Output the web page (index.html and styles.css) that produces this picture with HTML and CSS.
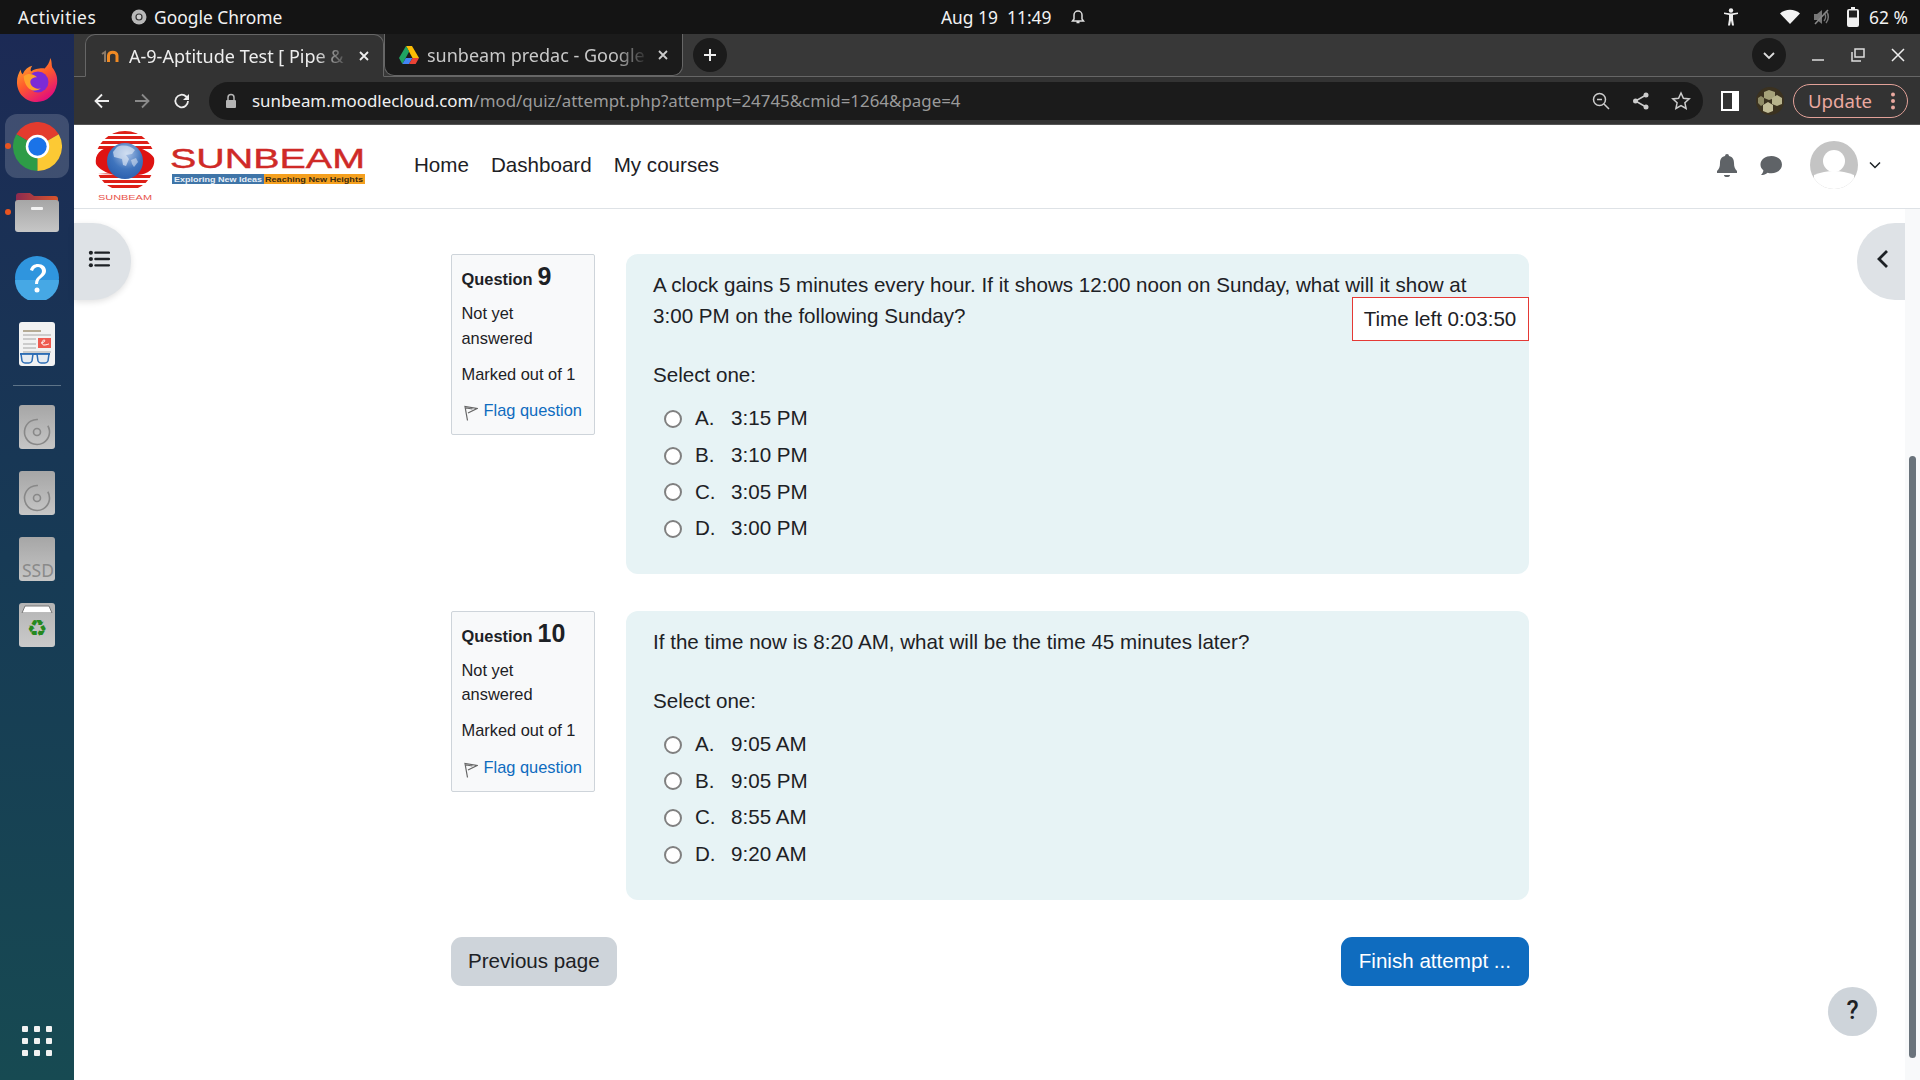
FILE: index.html
```html
<!DOCTYPE html>
<html lang="en">
<head>
<meta charset="utf-8">
<title>A-9-Aptitude Test</title>
<link rel="stylesheet" href="styles.css">
</head>
<body>
<div class="topbar">
  <span class="activities">Activities</span>
  <span class="appname">
    <svg class="app-ic" viewBox="0 0 16 16"><circle cx="8" cy="8" r="7.5" fill="#b8b8b8"/><circle cx="8" cy="8" r="3.6" fill="#333"/><circle cx="8" cy="8" r="2.4" fill="#ccc"/></svg>
    Google Chrome
  </span>
  <span class="clock">Aug 19&nbsp;&nbsp;11:49</span>
  <svg class="clock-bell" viewBox="0 0 16 16"><path d="M8 2a4 4 0 0 0-4 4v4l-1.5 2h11L12 10V6a4 4 0 0 0-4-4zM6.5 13.5h3" fill="none" stroke="#ddd" stroke-width="1.5"/></svg>
  <div class="tray">
    <svg class="tray-a11y" viewBox="0 0 16 18"><circle cx="8" cy="2.5" r="2.2" fill="#eee"/><path d="M1 6l5 1v4l-1 6.500h2l1-5 1 5h2L10 11V7l5-1V4.500L8 5.500 1 4.500z" fill="#eee"/></svg>
    <svg class="tray-wifi" viewBox="0 0 20 16"><path d="M10 15L0 4.500C5.500-.5 14.500-.5 20 4.500z" fill="#f2f2f2"/></svg>
    <svg class="tray-vol" viewBox="0 0 18 18"><path d="M1 6h3l5-4v14l-5-4H1z" fill="#777"/><path d="M11 5a6 6 0 0 1 0 8M13 3a9 9 0 0 1 0 12" fill="none" stroke="#777" stroke-width="1.500"/><path d="M2 16L15 2" stroke="#888" stroke-width="1.500"/></svg>
    <svg class="tray-bat" viewBox="0 0 12 20"><path d="M4 0h4v2h2a2 2 0 0 1 2 2v14a2 2 0 0 1-2 2H2a2 2 0 0 1-2-2V4a2 2 0 0 1 2-2h2z" fill="#f0f0f0"/><rect x="2" y="3.500" width="8" height="7" fill="#222"/></svg>
    <span class="battery">62 %</span>
  </div>
</div>

<div class="desktop">
  <nav class="dock">
    <div class="dock-slot">
      <svg class="ic-firefox" viewBox="0 0 44 48">
        <defs>
          <linearGradient id="ff" x1="0" y1="0" x2="0.6" y2="1"><stop offset="0" stop-color="#ffbd2e"/><stop offset="0.55" stop-color="#ff5a2c"/><stop offset="1" stop-color="#e3107a"/></linearGradient>
        </defs>
        <path d="M36 1c2 4 1 7 2 10 4 5 6 11 5 17-2 12-11 19-21 19C10 47 1 38 1 26c0-5 2-10 4-13 0 3 1 4 2 5 2-5 6-8 10-9-2 3-2 5-1 6 3-3 12-4 14-3 3-3 5-6 6-11z" fill="url(#ff)"/>
        <circle cx="23" cy="26" r="11" fill="#7b2bd6"/>
        <path d="M8 20c5-4 11-2 14 1-4 0-7 2-7 5 0 4 5 8 11 7-7 5-17 1-18-13z" fill="#ffa12b"/>
      </svg>
    </div>
    <div class="dock-slot is-active">
      <i class="run-dot"></i>
      <svg class="ic-chrome" viewBox="0 0 48 48">
        <path d="M24 24L44.800 12A24 24 0 0 0 3.200 12z" fill="#e33b2e"/>
        <path d="M24 24L3.200 12A24 24 0 0 0 24 48z" fill="#2d9c47"/>
        <path d="M24 24L24 48A24 24 0 0 0 44.800 12z" fill="#fcc934"/>
        <circle cx="24" cy="24" r="11.500" fill="#fff"/>
        <circle cx="24" cy="24" r="9" fill="#1a73e8"/>
      </svg>
    </div>
    <div class="dock-slot">
      <i class="run-dot"></i>
      <svg class="ic-tile-wide" viewBox="0 0 44 40">
        <defs>
          <linearGradient id="tile" x1="0" y1="0" x2="0" y2="1"><stop offset="0" stop-color="#a6a6a6"/><stop offset="1" stop-color="#c6c6c6"/></linearGradient>
          <linearGradient id="fold" x1="0" y1="0" x2="1" y2="0"><stop offset="0" stop-color="#8c2a50"/><stop offset="1" stop-color="#d9552b"/></linearGradient>
        </defs>
        <path d="M1 4a3 3 0 0 1 3-3h11l4 3h21a3 3 0 0 1 3 3v8H1z" fill="url(#fold)"/>
        <rect x="0" y="8" width="44" height="32" rx="3" fill="url(#tile)"/>
        <rect x="16" y="15" width="12" height="3" rx="1" fill="#f3f3f3"/>
      </svg>
    </div>
    <div class="dock-slot">
      <svg class="ic-tile-wide" viewBox="0 0 44 44"><circle cx="22" cy="22" r="22" fill="#2f95de"/><path d="M0 24a22 22 0 0 0 44 0z" fill="#46a8e5"/><path d="M15 14c1-4 4-6 8-6 5 0 8 3 8 7 0 6-8 6-8 13h-3c0-8 7-8 7-13 0-2-2-4-4-4s-4 1-5 4z" fill="#fff"/><circle cx="22" cy="34" r="2.500" fill="#fff"/></svg>
    </div>
    <div class="dock-slot">
      <svg class="ic-tile" viewBox="0 0 36 44">
        <rect width="36" height="44" rx="3" fill="#f2f2f2"/>
        <rect x="4" y="8" width="18" height="2" fill="#b5ab95"/>
        <rect x="4" y="12" width="28" height="2" fill="#ccc"/>
        <rect x="4" y="16" width="13" height="2" fill="#ccc"/>
        <rect x="4" y="21" width="13" height="2" fill="#ccc"/>
        <rect x="4" y="25" width="13" height="2" fill="#ccc"/>
        <rect x="4" y="29" width="28" height="2" fill="#ccc"/>
        <rect x="19" y="16" width="13" height="10" fill="#ee5a50"/>
        <path d="M22 21c3 0 5-3 3-3s-3 5 0 5 4-1 5-1" fill="none" stroke="#fff"/>
        <path d="M1 32h30" stroke="#2e6db5" stroke-width="2"/>
        <path d="M2 32h12l-1 7q-1 2-3 2H6q-2 0-3-2zM18 32h12l-1 7q-1 2-3 2h-4q-2 0-3-2z" fill="#dbe6f2" fill-opacity=".5" stroke="#2e6db5" stroke-width="1.500"/>
      </svg>
    </div>
    <hr class="dock-sep">
    <div class="dock-slot">
      <svg class="ic-tile" viewBox="0 0 36 44"><rect width="36" height="44" rx="3" fill="url(#tile)"/><circle cx="18" cy="27" r="12.500" fill="none" stroke="#888" stroke-width="1.600" stroke-dasharray="66 13" transform="rotate(-30 18 27)"/><circle cx="18" cy="27" r="3.500" fill="none" stroke="#888" stroke-width="1.600"/></svg>
    </div>
    <div class="dock-slot">
      <svg class="ic-tile" viewBox="0 0 36 44"><rect width="36" height="44" rx="3" fill="url(#tile)"/><circle cx="18" cy="27" r="12.500" fill="none" stroke="#888" stroke-width="1.600" stroke-dasharray="66 13" transform="rotate(-30 18 27)"/><circle cx="18" cy="27" r="3.500" fill="none" stroke="#888" stroke-width="1.600"/></svg>
    </div>
    <div class="dock-slot">
      <div class="ssd">SSD</div>
    </div>
    <div class="dock-slot">
      <div class="trash">
        <svg class="trash-lid" viewBox="0 0 36 9"><path d="M3 9l3-7h24l3 7z" fill="#fff" stroke="#777"/></svg>
        <span class="recycle">♻</span>
      </div>
    </div>
    <div class="dock-grid">
      <i></i><i></i><i></i><i></i><i></i><i></i><i></i><i></i><i></i>
    </div>
  </nav>

  <div class="browser">
    <div class="tabstrip">
      <div class="tab is-current">
        <svg class="favicon" viewBox="0 0 20 16"><path d="M1 6l3-2v10" fill="none" stroke="#8a7a6a" stroke-width="2"/><path d="M7.500 14V7.500c0-4.500 8.500-4.500 8.500 0V14" fill="none" stroke="#f08a24" stroke-width="3"/></svg>
        <span class="tab-title">A-9-Aptitude Test [ Pipe &amp;</span>
        <svg class="tab-x" viewBox="0 0 12 12"><path d="M2 2l8 8M10 2l-8 8" stroke="#eee" stroke-width="1.800"/></svg>
      </div>
      <div class="tab is-other">
        <svg class="favicon drive" viewBox="0 0 20 18"><path d="M7 0h6l7 12h-6.500z" fill="#fbbc04"/><path d="M7 0l3.200 5.600L3.400 18 0 12z" fill="#1fa463"/><path d="M3.400 18l3.400-6h6.700L10 18z" fill="#4285f4"/><path d="M10 18l3.500-6H20l-3.400 6z" fill="#ea4335"/></svg>
        <span class="tab-title">sunbeam predac - Google</span>
        <svg class="tab-x" viewBox="0 0 12 12"><path d="M2 2l8 8M10 2l-8 8" stroke="#ccc" stroke-width="1.800"/></svg>
      </div>
      <div class="round-btn new-tab"><svg viewBox="0 0 16 16"><path d="M8 2v12M2 8h12" stroke="#eee" stroke-width="2"/></svg></div>
      <div class="strip-right">
        <div class="round-btn tab-search"><svg viewBox="0 0 14 14"><path d="M2 5l5 5 5-5" fill="none" stroke="#ddd" stroke-width="1.800"/></svg></div>
        <svg class="win-ic" viewBox="0 0 16 16"><path d="M2 13h12" stroke="#ddd" stroke-width="1.500"/></svg>
        <svg class="win-ic" viewBox="0 0 16 16"><path d="M5 2h9v8H5z" fill="none" stroke="#ddd" stroke-width="1.500"/><path d="M2 5v9h9" fill="none" stroke="#ddd" stroke-width="1.500"/></svg>
        <svg class="win-ic" viewBox="0 0 16 16"><path d="M2 2l12 12M14 2L2 14" stroke="#eee" stroke-width="1.500"/></svg>
      </div>
    </div>

    <div class="toolbar">
      <svg class="tool-ic" viewBox="0 0 20 20"><path d="M17 10H4M10 3.500L3.500 10l6.500 6.500" fill="none" stroke="#eee" stroke-width="1.800"/></svg>
      <svg class="tool-ic" viewBox="0 0 20 20"><path d="M3 10h13M10 3.500l6.500 6.500-6.500 6.500" fill="none" stroke="#8a8a8a" stroke-width="1.800"/></svg>
      <svg class="tool-ic" viewBox="0 0 20 20"><path d="M16 10a6.300 6.300 0 1 1-1.900-4.500L16.500 8" fill="none" stroke="#eee" stroke-width="1.800"/><path d="M17 3v6h-6z" fill="#eee"/></svg>
      <div class="omnibox">
        <svg class="lock" viewBox="0 0 12 16"><path d="M3 7V4.500a3 3 0 0 1 6 0V7" fill="none" stroke="#b5b5b5" stroke-width="1.500"/><rect x="1" y="7" width="10" height="8" rx="1" fill="#b5b5b5"/></svg>
        <span class="url"><b>sunbeam.moodlecloud.com</b>/mod/quiz/attempt.php?attempt=24745&amp;cmid=1264&amp;page=4</span>
        <svg class="omni-ic" viewBox="0 0 20 20"><circle cx="8.500" cy="8.500" r="6" fill="none" stroke="#ccc" stroke-width="1.500"/><path d="M6 8.500h5M13 13l5 5" stroke="#ccc" stroke-width="1.500"/></svg>
        <svg class="omni-ic" viewBox="0 0 20 20"><circle cx="15" cy="4" r="2.500" fill="#ccc"/><circle cx="15" cy="16" r="2.500" fill="#ccc"/><circle cx="4.500" cy="10" r="2.500" fill="#ccc"/><path d="M15 4L4.500 10 15 16" fill="none" stroke="#ccc" stroke-width="1.500"/></svg>
        <svg class="omni-ic" viewBox="0 0 20 20"><path d="M10 2l2.400 5.300 5.800.6-4.300 3.900 1.200 5.700L10 14.600 4.900 17.500l1.200-5.700L1.800 7.900l5.800-.6z" fill="none" stroke="#ccc" stroke-width="1.500"/></svg>
      </div>
      <svg class="panel-ic" viewBox="0 0 18 20"><rect x="0" y="0" width="18" height="20" fill="#fff"/><rect x="2" y="2" width="9" height="16" fill="#333"/></svg>
      <svg class="ext-ic" viewBox="0 0 28 28">
        <circle cx="14" cy="14" r="14" fill="#3b3220"/>
        <path d="M13 3l6 2v6l-6 2-5-2V5z" fill="#a6a27a"/>
        <path d="M21 8l5 3v6l-5 2-5-2v-6z" fill="#b8b48c"/>
        <path d="M12 15l5 3v6l-5 2-5-2v-6z" fill="#c2bd98"/>
        <path d="M5 9l3 2v6l-3 2-3-3v-5z" fill="#8f8b66"/>
      </svg>
      <div class="update-pill">
        <span>Update</span>
        <svg class="dots" viewBox="0 0 4 18"><circle cx="2" cy="2.500" r="2" fill="#eaa9a0"/><circle cx="2" cy="9" r="2" fill="#eaa9a0"/><circle cx="2" cy="15.500" r="2" fill="#eaa9a0"/></svg>
      </div>
    </div>

    <div class="page">
      <header class="navbar">
        <svg class="logo" viewBox="0 0 270 72">
          <defs>
            <clipPath id="disc"><circle cx="30" cy="31" r="30"/></clipPath>
            <radialGradient id="globe" cx="0.55" cy="0.3" r="0.85"><stop offset="0" stop-color="#a9c2e6"/><stop offset="0.5" stop-color="#3f74bd"/><stop offset="1" stop-color="#2257a8"/></radialGradient>
          </defs>
          <g clip-path="url(#disc)">
            <rect x="0" y="1" width="60" height="3" fill="#de1f17"/>
            <rect x="0" y="6" width="60" height="3" fill="#de1f17"/>
            <rect x="0" y="11" width="60" height="3" fill="#de1f17"/>
            <rect x="0" y="16" width="60" height="3" fill="#de1f17"/>
            <rect x="0" y="45" width="60" height="3" fill="#de1f17"/>
            <rect x="0" y="50" width="60" height="3" fill="#de1f17"/>
            <rect x="0" y="55" width="60" height="3" fill="#de1f17"/>
          </g>
          <path d="M1 34c-2-12 8-17 18-17l38 1c-8 1-26 0-32 3-8 4-12 14-6 24l-6-2C8 41 3 38 1 34z" fill="#de1312"/>
          <path d="M59 28c2 12-8 17-18 17L3 44c8-1 26 0 32-3 8-4 12-14 6-24l6 2c5 2 10 5 12 9z" fill="#de1312"/>
          <circle cx="30" cy="31" r="18" fill="url(#globe)"/>
          <path d="M22 17c6-3 14-1 18 3l-3 4-6 1 3 4-3 7-3-1-1-6-8-2-1-5z" fill="#eaf0f8" opacity="0.6"/>
          <path d="M36 30l5-2 2 4-4 5-2-3z" fill="#eaf0f8" opacity="0.5"/>
          <text class="logo-small" x="3" y="70" textLength="54" lengthAdjust="spacingAndGlyphs">SUNBEAM</text>
          <text class="logo-word" x="75" y="38" textLength="195" lengthAdjust="spacingAndGlyphs">SUNBEAM</text>
          <rect x="77" y="44" width="92" height="10" fill="#3f75a8"/>
          <rect x="169" y="44" width="101" height="10" fill="#f5a01e"/>
          <text class="logo-tag light" x="79" y="52" textLength="88" lengthAdjust="spacingAndGlyphs">Exploring New Ideas</text>
          <text class="logo-tag dark" x="170" y="52" textLength="98" lengthAdjust="spacingAndGlyphs">Reaching New Heights</text>
        </svg>
        <ul class="mainnav">
          <li>Home</li>
          <li>Dashboard</li>
          <li>My courses</li>
        </ul>
        <div class="usernav">
          <svg class="bell" viewBox="0 0 20 24"><path d="M10 1a2 2 0 0 1 2 2c4 1 5 4 5 7 0 4 1 6 3 8v2H0v-2c2-2 3-4 3-8 0-3 1-6 5-7a2 2 0 0 1 2-2z" fill="#5f6367"/><path d="M7 22h6a3 2 0 0 1-6 0z" fill="#5f6367"/></svg>
          <svg class="chat" viewBox="0 0 24 22"><path d="M13 1c6 0 11 3.500 11 9s-5 9-11 9c-1 0-3 0-4-.5C7 20 5 21 2 21c1.500-1.500 2.500-3 2.500-5C2.500 14.500 1.500 12.500 1.500 10 1.500 4.500 7 1 13 1z" fill="#5f6367"/></svg>
          <svg class="avatar" viewBox="0 0 48 48"><defs><clipPath id="av"><circle cx="24" cy="24" r="24"/></clipPath></defs><circle cx="24" cy="24" r="24" fill="#c4c4c4"/><g clip-path="url(#av)"><circle cx="24" cy="20" r="11" fill="#fff"/><path d="M4 34q10-4 20-4t20 4v14H4z" fill="#fff"/></g></svg>
          <svg class="caret" viewBox="0 0 12 8"><path d="M1 1.500l5 5 5-5" fill="none" stroke="#1d2125" stroke-width="1.500"/></svg>
        </div>
      </header>

      <div class="page-body">
        <main class="main">
          <button class="drawer-btn left" type="button" aria-label="Open course index">
            <svg viewBox="0 0 24 20"><circle cx="3" cy="3" r="2.300" fill="#1d2125"/><circle cx="3" cy="10" r="2.300" fill="#1d2125"/><circle cx="3" cy="17" r="2.300" fill="#1d2125"/><path d="M8 3h15M8 10h15M8 17h15" stroke="#1d2125" stroke-width="2.600" stroke-linecap="round"/></svg>
          </button>
          <button class="drawer-btn right" type="button" aria-label="Open block drawer">
            <svg viewBox="0 0 14 20"><path d="M11 2L3 10l8 8" fill="none" stroke="#1d2125" stroke-width="2.800"/></svg>
          </button>

          <div class="quiz">
            <div class="timer">Time left 0:03:50</div>

            <section class="que">
              <aside class="info">
                <h3 class="qno">Question <span>9</span></h3>
                <p class="state">Not yet answered</p>
                <p class="grade">Marked out of 1</p>
                <p class="flag">
                  <svg class="flag-ic" viewBox="0 0 14 16"><path d="M3.500 15.500L1 1.500l12 2-9 4.500M2 3l6.500 1" fill="none" stroke="#666" stroke-width="1.200"/></svg>
                  <a>Flag question</a>
                </p>
              </aside>
              <div class="qbody">
                <p class="qtext">A clock gains 5 minutes every hour. If it shows 12:00 noon on Sunday, what will it show at 3:00 PM on the following Sunday?</p>
                <p class="prompt">Select one:</p>
                <label class="opt"><input type="radio" name="q9"><span class="letter">A.</span><span>3:15 PM</span></label>
                <label class="opt"><input type="radio" name="q9"><span class="letter">B.</span><span>3:10 PM</span></label>
                <label class="opt"><input type="radio" name="q9"><span class="letter">C.</span><span>3:05 PM</span></label>
                <label class="opt"><input type="radio" name="q9"><span class="letter">D.</span><span>3:00 PM</span></label>
              </div>
            </section>

            <section class="que">
              <aside class="info">
                <h3 class="qno">Question <span>10</span></h3>
                <p class="state">Not yet answered</p>
                <p class="grade">Marked out of 1</p>
                <p class="flag">
                  <svg class="flag-ic" viewBox="0 0 14 16"><path d="M3.500 15.500L1 1.500l12 2-9 4.500M2 3l6.500 1" fill="none" stroke="#666" stroke-width="1.200"/></svg>
                  <a>Flag question</a>
                </p>
              </aside>
              <div class="qbody">
                <p class="qtext">If the time now is 8:20 AM, what will be the time 45 minutes later?</p>
                <p class="prompt">Select one:</p>
                <label class="opt"><input type="radio" name="q10"><span class="letter">A.</span><span>9:05 AM</span></label>
                <label class="opt"><input type="radio" name="q10"><span class="letter">B.</span><span>9:05 PM</span></label>
                <label class="opt"><input type="radio" name="q10"><span class="letter">C.</span><span>8:55 AM</span></label>
                <label class="opt"><input type="radio" name="q10"><span class="letter">D.</span><span>9:20 AM</span></label>
              </div>
            </section>

            <div class="actions">
              <button class="btn btn-secondary" type="button">Previous page</button>
              <button class="btn btn-primary" type="button">Finish attempt ...</button>
            </div>
          </div>

          <button class="help-btn" type="button">?</button>
        </main>
        <div class="scrollbar"><div class="thumb"></div></div>
      </div>
    </div>
  </div>
</div>
</body>
</html>
```

FILE: styles.css
```css
* { box-sizing: border-box; }
html, body { margin: 0; height: 100%; overflow: hidden; }
body {
  display: flex;
  flex-direction: column;
  width: 1920px;
  height: 1080px;
  font-family: "Liberation Sans", Arial, sans-serif;
  color: #1d2125;
  background: #fff;
}
p, h3, ul { margin: 0; padding: 0; }

/* GNOME top bar */
.topbar {
  flex: 0 0 34px;
  display: flex;
  align-items: center;
  padding: 0 13px 0 18px;
  background: #141414;
  color: #f2f2f2;
  font: 17.4px "Noto Sans", sans-serif;
}
.activities { width: 113px; letter-spacing: .6px; }
.appname { display: flex; align-items: center; gap: 7px; width: 810px; }
.app-ic { width: 16px; height: 16px; }
.clock { width: 129px; }
.clock-bell { width: 16px; height: 16px; }
.tray { margin-left: auto; display: flex; align-items: center; }
.tray-a11y { width: 16px; height: 18px; margin-right: 41px; }
.tray-wifi { width: 20px; height: 16px; margin-right: 13px; }
.tray-vol { width: 18px; height: 18px; margin-right: 16px; }
.tray-bat { width: 12px; height: 20px; margin-right: 10px; }
.battery { width: 38px; white-space: nowrap; }

/* Ubuntu dock */
.desktop { flex: 1; display: flex; min-height: 0; }
.dock {
  flex: 0 0 74px;
  display: flex;
  flex-direction: column;
  align-items: center;
  padding-top: 13px;
  background: linear-gradient(180deg, #1c2a55 0%, #173a55 50%, #174a52 100%);
}
.dock-slot {
  position: relative;
  flex: 0 0 66px;
  width: 100%;
  display: flex;
  align-items: center;
  justify-content: center;
}
.dock-slot.is-active::before {
  content: "";
  position: absolute;
  left: 5px; top: 1px;
  width: 64px; height: 64px;
  border-radius: 12px;
  background: rgba(255, 255, 255, 0.16);
}
.run-dot {
  position: absolute;
  left: 5px; top: 30px;
  width: 6px; height: 6px;
  border-radius: 50%;
  background: #e95420;
}
.ic-firefox { width: 42px; height: 46px; }
.ic-chrome { position: relative; width: 49px; height: 49px; }
.ic-tile-wide { width: 44px; height: 44px; }
.ic-tile { width: 36px; height: 44px; }
.dock-sep {
  flex: 0 0 1px;
  width: 48px;
  margin: 8px 0 8px;
  border: 0;
  background: #5e7488;
}
.ssd {
  width: 36px;
  height: 44px;
  border-radius: 3px;
  background: linear-gradient(180deg, #a6a6a6, #c6c6c6);
  color: #8a8a8a;
  font: 17.5px/18px "Noto Sans", sans-serif;
  text-align: right;
  white-space: nowrap;
  padding: 24px 1px 0 0;
}
.trash {
  width: 36px;
  height: 44px;
  border-radius: 3px;
  background: linear-gradient(180deg, #b4b4b4, #cacaca);
  display: flex;
  flex-direction: column;
  align-items: center;
}
.trash-lid { width: 36px; height: 9px; margin-top: 1px; }
.recycle { color: #26891f; font: 700 23px/30px "DejaVu Sans", sans-serif; }
.dock-grid {
  margin-top: auto;
  margin-bottom: 24px;
  display: grid;
  grid-template-columns: repeat(3, 6px);
  grid-auto-rows: 6px;
  gap: 6px;
}
.dock-grid i { background: #f2f2f2; border-radius: 1px; }

/* Chrome */
.browser { flex: 1; min-width: 0; display: flex; flex-direction: column; }
.tabstrip {
  flex: 0 0 43px;
  display: flex;
  align-items: stretch;
  padding-left: 11px;
  background: #383838;
  border-bottom: 1px solid #666;
  font: 18px "Noto Sans", sans-serif;
}
.tab {
  width: 299px;
  display: flex;
  align-items: center;
  padding: 0 13px 0 15px;
  border-radius: 10px 10px 0 0;
  border: 1px solid #666;
}
.tab.is-current { background: #333; border-bottom-color: #333; color: #eee; margin-bottom: -1px; }
.tab.is-other { background: #1b1b1b; color: #c9c9c9; border-top: 0; border-radius: 0 0 10px 10px; padding-left: 14px; }
.favicon { flex: 0 0 20px; width: 20px; height: 16px; margin-right: 8px; }
.favicon.drive { height: 18px; }
.tab-title {
  flex: 1;
  min-width: 0;
  white-space: nowrap;
  -webkit-mask-image: linear-gradient(90deg, #000 84%, transparent 100%);
  mask-image: linear-gradient(90deg, #000 84%, transparent 100%);
}
.tab-x { flex: 0 0 12px; width: 12px; height: 12px; margin-left: 8px; }
.round-btn {
  width: 34px; height: 34px;
  border-radius: 50%;
  background: #1b1b1b;
  display: flex;
  align-items: center;
  justify-content: center;
  align-self: center;
}
.new-tab { margin-left: 10px; }
.new-tab svg { width: 16px; height: 16px; }
.tab-search svg { width: 14px; height: 14px; }
.strip-right { margin-left: auto; display: flex; align-items: center; gap: 24px; padding-right: 14px; }
.win-ic { width: 16px; height: 16px; }

.toolbar {
  flex: 0 0 48px;
  display: flex;
  align-items: center;
  padding: 0 0 0 8px;
  background: #333;
  border-bottom: 1px solid #555;
}
.tool-ic { flex: 0 0 20px; width: 20px; height: 20px; margin: 0 10px; }
.omnibox {
  flex: 0 0 1494px;
  height: 38px;
  margin-left: 7px;
  display: flex;
  align-items: center;
  padding: 0 12px 0 16px;
  border-radius: 19px;
  background: #1b1b1b;
}
.lock { width: 12px; height: 16px; margin-right: 15px; flex: none; }
.url { flex: 1; color: #9a9a9a; font: 16.9px "Noto Sans", sans-serif; white-space: nowrap; }
.url b { font-weight: 400; color: #f0f0f0; }
.omni-ic { width: 20px; height: 20px; margin-left: 20px; flex: none; }
.panel-ic { width: 18px; height: 20px; margin-left: 18px; flex: none; }
.ext-ic { width: 28px; height: 28px; margin-left: 17px; flex: none; }
.update-pill {
  width: 115px;
  height: 34px;
  margin-left: 9px;
  display: flex;
  align-items: center;
  justify-content: space-between;
  padding: 0 12px 0 14px;
  border: 1px solid #e2a198;
  border-radius: 17px;
  color: #eaa9a0;
  font: 18.6px "Noto Sans", sans-serif;
}
.dots { width: 4px; height: 18px; }

/* Page */
.page { flex: 1; min-height: 0; display: flex; flex-direction: column; background: #fff; }
.navbar {
  flex: 0 0 84px;
  display: flex;
  align-items: center;
  padding: 0 39px 3px 21px;
  border-bottom: 1px solid #dee2e6;
}
.logo { width: 270px; height: 72px; flex: none; margin-top: 2px; }
.logo-small { font: 8px "Liberation Sans", sans-serif; fill: #e8524a; }
.logo-word { font: 400 27px "Liberation Sans", sans-serif; fill: #cf2a27; stroke: #cf2a27; stroke-width: .4px; }
.logo-tag { font: 700 8px "Liberation Sans", sans-serif; }
.logo-tag.light { fill: #e6eef7; }
.logo-tag.dark { fill: #3a2a10; }
.mainnav { display: flex; gap: 22px; margin-left: 49px; list-style: none; font-size: 20.6px; }
.usernav { margin-left: auto; display: flex; align-items: center; }
.bell { width: 20px; height: 24px; }
.chat { width: 23px; height: 21px; margin-left: 22px; }
.avatar { width: 48px; height: 48px; margin-left: 28px; }
.caret { width: 12px; height: 8px; margin-left: 11px; }

.page-body { flex: 1; min-height: 0; display: flex; }
.main { position: relative; flex: 1; min-width: 0; padding-top: 45px; }
.quiz { position: relative; width: 1078px; margin: 0 auto; }
.timer {
  position: absolute;
  top: 43px; right: 0;
  width: 177px; height: 44px;
  display: flex;
  align-items: center;
  justify-content: center;
  font-size: 20.6px;
  background: #fff;
  border: 1px solid #e53935;
}
.que { display: flex; gap: 31px; align-items: flex-start; margin-bottom: 37px; }
.info {
  flex: 0 0 144px;
  min-width: 0;
  height: 181px;
  padding: 7px 10px;
  background: #f8f9fa;
  border: 1px solid #ced4da;
  border-radius: 2px;
  font-size: 16.4px;
  line-height: 24.5px;
}
.qno { display: flex; align-items: baseline; gap: 5px; font-size: 16.4px; line-height: 28px; font-weight: 700; height: 28px; }
.qno span { font-size: 25px; font-weight: 700; }
.state { margin-top: 11px; }
.grade { margin-top: 11.5px; }
.flag { margin-top: 12px; display: flex; align-items: center; white-space: nowrap; }
.flag a { color: #0f6cbf; }
.flag-ic { width: 14px; height: 16px; margin: 5px 6px 0 2px; flex: none; }
.qbody {
  flex: 1;
  padding: 15px 27px 27.5px 27.5px;
  background: #e7f3f5;
  border-radius: 12px;
  font-size: 20.6px;
  line-height: 31px;
}
.prompt { margin-top: 28px; margin-bottom: 9.5px; }
.opt { display: flex; align-items: center; height: 36.7px; }
.opt input {
  appearance: none;
  width: 18px; height: 18px;
  margin: 2px 0 0 11px;
  border: 2px solid #808080;
  border-radius: 50%;
  background: #fff;
  flex: none;
}
.letter { width: 36px; margin-left: 13px; }
.actions { display: flex; justify-content: space-between; }
.btn {
  height: 49px;
  border: 0;
  border-radius: 11px;
  padding: 0 17.5px;
  font: 20.6px "Liberation Sans", sans-serif;
}
.btn-secondary { background: #ced4da; color: #1d2125; }
.btn-primary { background: #0f6cbf; color: #fff; }

.drawer-btn {
  position: absolute;
  top: 14px;
  height: 77px;
  border: 0;
  padding: 0 0 5px 0;
  background: #dee2e6;
  display: flex;
  align-items: center;
  justify-content: center;
}
.drawer-btn.left { left: 0; width: 57px; border-radius: 0 38px 38px 0; box-shadow: 0 2px 6px rgba(0,0,0,.12); }
.drawer-btn.left svg { width: 22px; height: 18px; margin-right: 7px; }
.drawer-btn.right { right: 0; width: 48px; border-radius: 38px 0 0 38px; }
.drawer-btn.right svg { width: 14px; height: 20px; margin-left: 4px; }
.help-btn {
  position: absolute;
  left: 1754px; top: 778px;
  width: 49px; height: 49px;
  border: 0;
  padding: 0 0 3px;
  border-radius: 50%;
  background: #ced4da;
  color: #1d2125;
  font: 500 25px "Roboto", sans-serif;
}
.scrollbar { position: relative; flex: 0 0 15px; background: #f8f9fa; }
.thumb {
  position: absolute;
  left: 4px; top: 247px;
  width: 7px; height: 602px;
  border-radius: 4px;
  background: #6a737b;
}
```
